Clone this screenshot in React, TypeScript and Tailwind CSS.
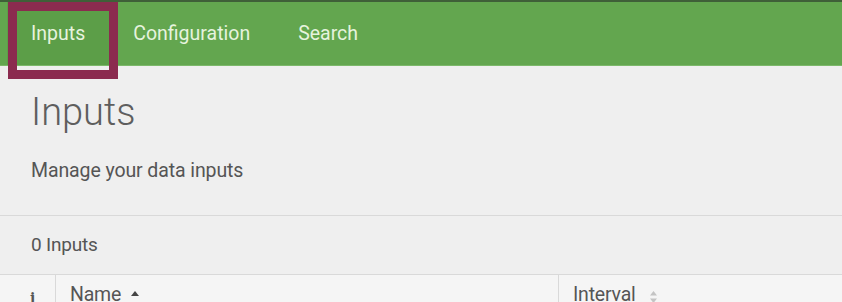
import React from "react";

export default function App() {
  return (
    <div className="w-[842px] h-[302px] overflow-hidden bg-[#efefef] font-['Roboto',sans-serif] relative">
      <div className="h-[2px] bg-[#3f5f38]" />
      <nav className="h-[64px] bg-[#63a64f] border-b border-[#7cb86a] flex items-stretch pl-[7px]">
        <div className="px-[24px] flex items-center bg-[#5c9e48] text-[#e6f3de] text-[19.5px]">Inputs</div>
        <div className="px-[24px] flex items-center text-[#e6f3de] text-[19.5px]">Configuration</div>
        <div className="px-[24px] flex items-center text-[#e6f3de] text-[19.5px]">Search</div>
      </nav>
      <div className="absolute left-[8px] top-[2px] w-[110px] h-[77px] border-[9.5px] border-[#8b2b4f]" />
      <div className="px-[31px]">
        <h1 className="mt-[24px] text-[38px] leading-[44px] font-light text-[#5e5e5e]">Inputs</h1>
        <p className="mt-[26px] text-[19.5px] leading-[22px] text-[#555] tracking-[-0.1px]">Manage your data inputs</p>
      </div>
      <div className="mt-[33px] border-t border-[#d9d9d9]" />
      <div className="h-[58px] flex items-center px-[31px] text-[19px] text-[#555] tracking-[-0.2px]">0 Inputs</div>
      <div className="border-t border-[#d9d9d9] bg-[#f5f5f5] flex h-[40px] text-[19.5px] text-[#555] tracking-[-0.2px]">
        <div className="w-[56px] border-r border-[#d9d9d9] flex justify-center pt-[13px] font-['DejaVu_Serif',serif] font-bold text-[14px] pl-[10px]">i</div>
        <div className="w-[503px] border-r border-[#d9d9d9] pl-[14px] pt-[8px] flex items-start gap-[10px]">
          <span className="leading-[24px]">Name</span>
          <svg width="8" height="6" viewBox="0 0 8 6" className="mt-[8px]"><path d="M4 0 L8 5 L0 5 Z" fill="#444" /></svg>
        </div>
        <div className="pl-[14px] pt-[8px] flex items-start gap-[14px]">
          <span className="leading-[24px]">Interval</span>
          <svg width="7" height="12" viewBox="0 0 7 12" className="mt-[8px]"><path d="M3.5 0 L7 4.5 L0 4.5 Z M3.5 12 L7 7.5 L0 7.5 Z" fill="#c4c4c4" /></svg>
        </div>
      </div>
    </div>
  );
}
